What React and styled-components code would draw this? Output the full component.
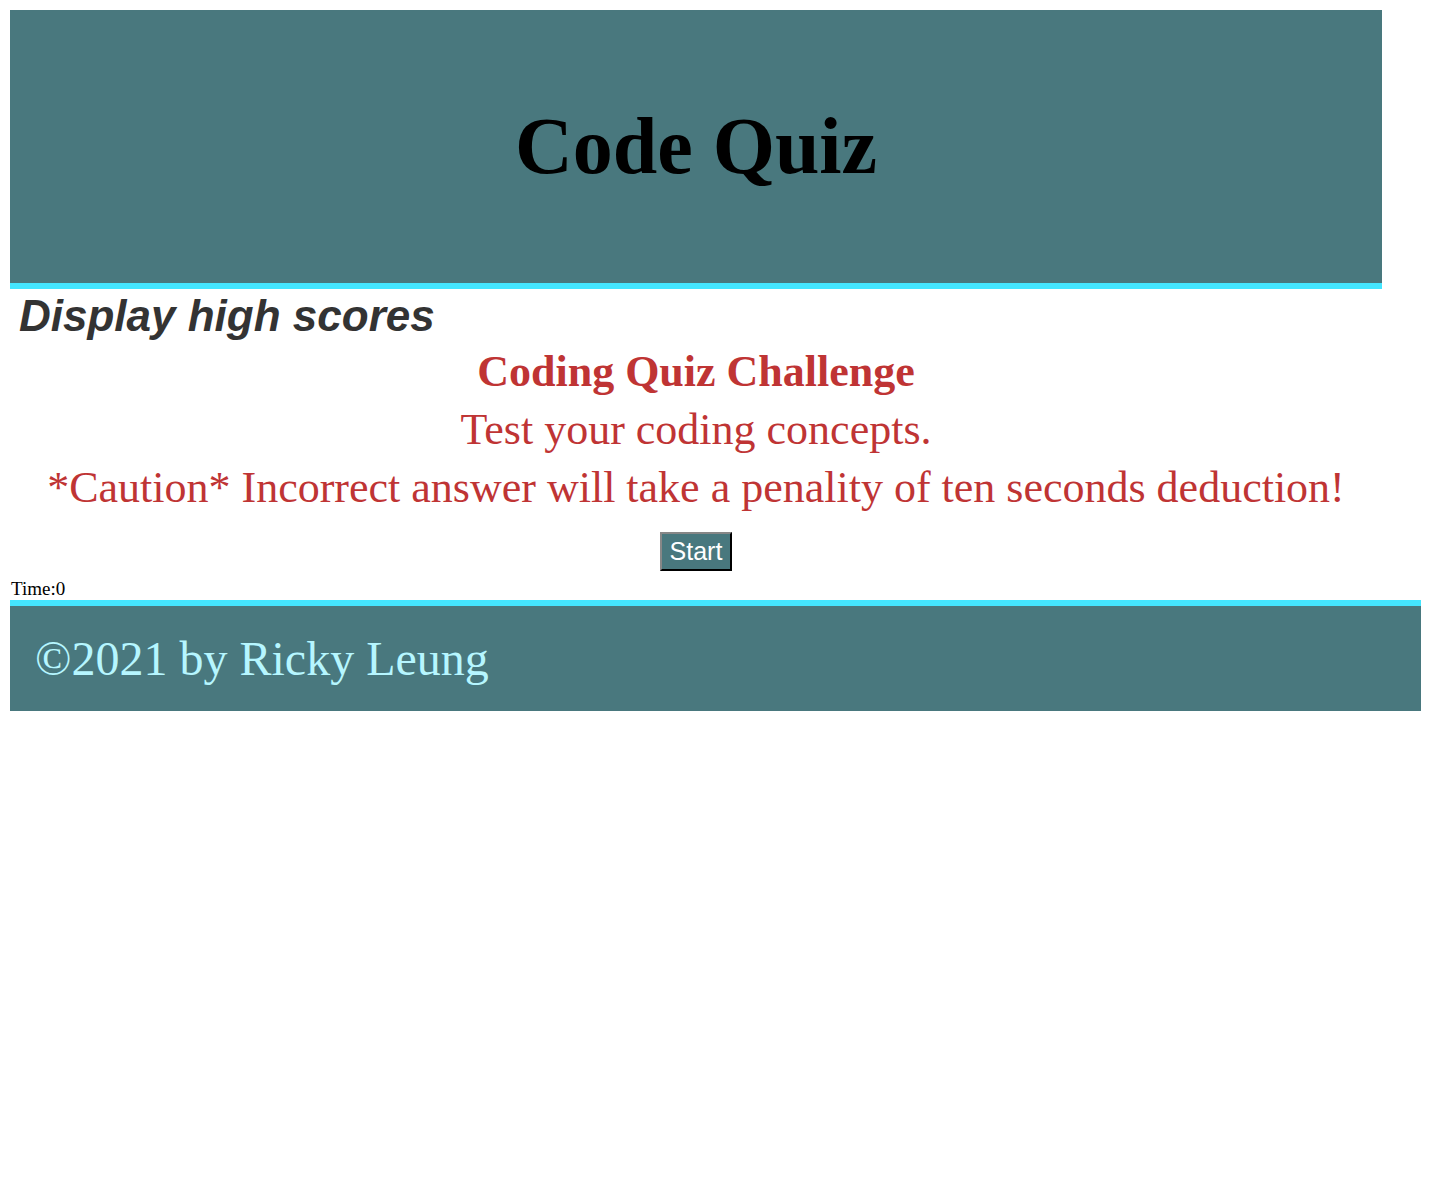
import React from 'react';
import styled, { createGlobalStyle } from 'styled-components';

const GlobalStyle = createGlobalStyle`
  body {
    margin: 10px;
    font-family: "Liberation Serif", "Times New Roman", serif;
    background: #fff;
  }
`;

const Header = styled.header`
  width: 1372px;
  height: 273px;
  background: #49787e;
  border-bottom: 6px solid #44e6ff;
  display: flex;
  align-items: center;
  justify-content: center;
  h1 {
    margin: 0;
    font-size: 80px;
    font-weight: bold;
    color: #000;
  }
`;

const ScoresLink = styled.a`
  display: block;
  padding-left: 9px;
  font-family: "Liberation Sans", Arial, sans-serif;
  font-style: italic;
  font-weight: bold;
  font-size: 44px;
  line-height: 54px;
  color: #333;
  text-decoration: none;
`;

const Intro = styled.section`
  width: 1372px;
  text-align: center;
  color: #bf3434;
`;

const Title = styled.h2`
  margin: 0;
  font-size: 44px;
  font-weight: bold;
  line-height: 58px;
`;

const Line = styled.p`
  margin: 0;
  font-size: 44px;
  line-height: 58px;
`;

const StartButton = styled.button`
  display: block;
  margin: 15px auto 0;
  background: #49787e;
  color: #fff;
  font-family: "Liberation Sans", Arial, sans-serif;
  font-size: 25px;
  line-height: 31px;
  padding: 2px 8px;
  border: 2px outset #333;
`;

const Timer = styled.div`
  font-size: 19px;
  line-height: 22px;
  margin-top: 7px;
  padding-left: 1px;
`;

const Footer = styled.footer`
  width: 1421px;
  background: #49787e;
  border-top: 6px solid #44e6ff;
  padding: 25px 25px;
  box-sizing: border-box;
  height: 111px;
  p {
    margin: 0;
    color: #b6f6ff;
    font-size: 48px;
    line-height: 56px;
  }
`;

export default function App() {
  return (
    <>
      <GlobalStyle />
      <Header>
        <h1>Code Quiz</h1>
      </Header>
      <ScoresLink href="#">Display high scores</ScoresLink>
      <Intro>
        <Title>Coding Quiz Challenge</Title>
        <Line>Test your coding concepts.</Line>
        <Line>*Caution* Incorrect answer will take a penality of ten seconds deduction!</Line>
        <StartButton>Start</StartButton>
      </Intro>
      <Timer>Time:0</Timer>
      <Footer>
        <p>©2021 by Ricky Leung</p>
      </Footer>
    </>
  );
}
